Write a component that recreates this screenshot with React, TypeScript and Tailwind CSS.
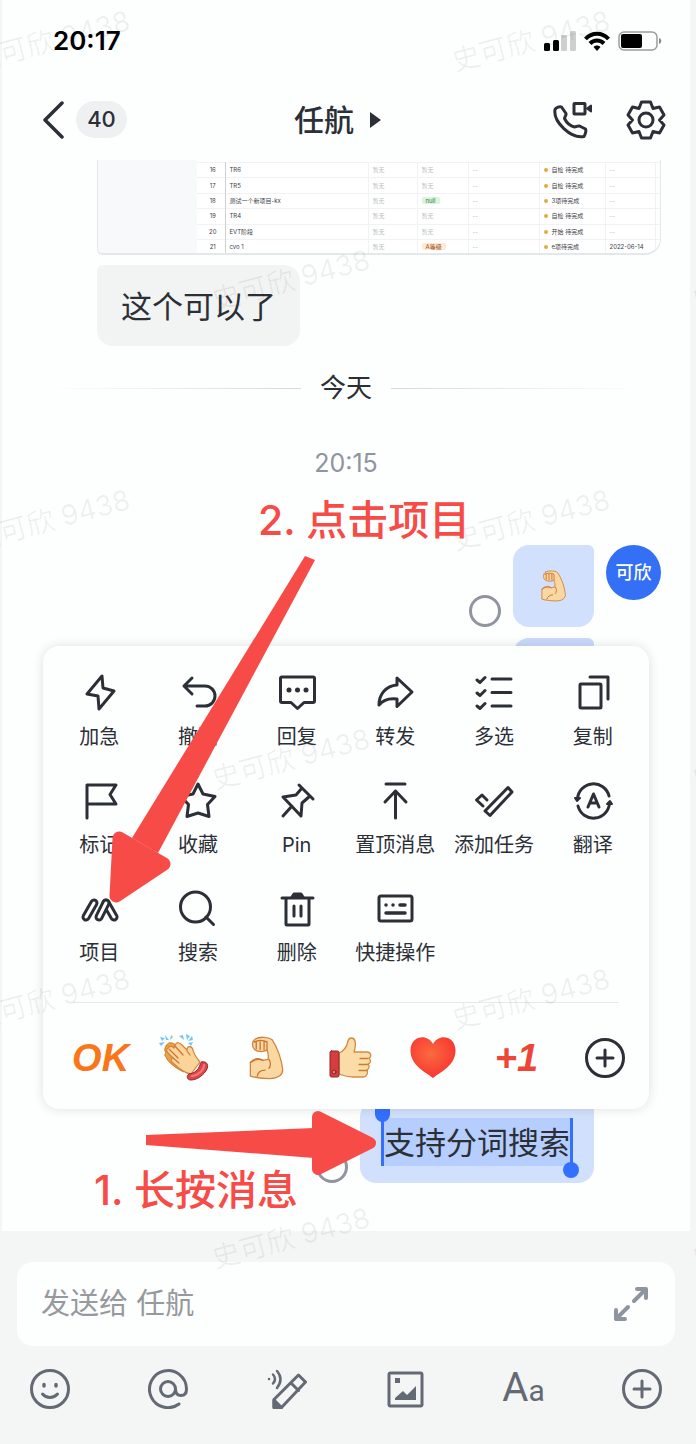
import { ReactNode } from "react";

type IconProps = { children: ReactNode; className?: string };

const Icon = ({ children, className = "size-10" }: IconProps) => (
  <svg
    className={className}
    viewBox="0 0 40 40"
    fill="none"
    stroke="currentColor"
    strokeWidth="3"
    strokeLinecap="round"
    strokeLinejoin="round"
    aria-hidden="true"
  >
    {children}
  </svg>
);

const PlusCircle = () => (
  <Icon>
    <circle cx="20" cy="20" r="18.5" />
    <path d="M20 12v16M12 20h16" />
  </Icon>
);

const Muscle = ({ className }: { className: string }) => (
  <svg className={className} viewBox="0 0 36 45" fill="none" strokeLinejoin="round" strokeLinecap="round">
    <path
      d="M6 3C10 .5 19 .8 23 3.500C29 12 33 25 34 34c.4 6-5 9.500-13 9.500-8 0-15-1-20-2.500V27c4-4.500 9-5 13-2l5-1c1-4 0-7-1-9.500-4 2-10 2-13-1C2 10 3 5 6 3Z"
      fill="#fbd8a2"
      stroke="#cf8540"
      strokeWidth="1.300"
    />
    <path d="M20 24c2 3 2 7 0 9M8 41c1-4 4-6 8-6M1 27c4-3 8-4 13-2M7 6v7M11 6v8M15 6v8M5 6c4-2 9-2 13 0v8" stroke="#c9722f" strokeWidth="1.300" />
  </svg>
);

const Clap = () => (
  <svg className="h-12 w-[50px]" viewBox="0 0 50 48" fill="none" strokeLinejoin="round" strokeLinecap="round">
    <path d="m1 3 5 1-3 3zM6 1l4 5h-3zM12 1l-1 5 3-3zM0 9l6-1-4 4zM20 2l4-1 1 5zM27 0l1 6 3-4zM33 2l-4 5 5-1zM29 9l5-1-2 4z" fill="#79c4f5" />
    <path d="M7 12c2-4 5-4 8-2l6 3 13 15-9 10C16 34 9 28 7 23c-2-2-1-3 0-4-2-3-1-5 0-7Z" fill="#f0a047" stroke="#c97726" />
    <path
      d="M9 14c2-3 4-2 6 0l1-3c2-4 5-2 7 0l5 5c0-5 5-4 6 0 1 5 4 8 7 12L32 40c-7-1-13-6-18-11-3-2-2-5 0-5l-4-4c-3-3-3-5-1-6Z"
      fill="#fbd49a"
      stroke="#cf8338"
      strokeWidth="1.200"
    />
    <path d="m10 15 9 9M16 12l8 9M14 24l6 5M28 17l3 4" stroke="#c9772f" strokeWidth="1.200" />
    <path d="M43 28c4-1 7 2 5 7-3 6-10 11-16 11-4 0-5-4-2-6 6-1 9-4 11-9 0-2 1-3 2-3Z" fill="#df4549" stroke="#8f2529" />
    <path d="M45 31c0 5-5 10-12 11" stroke="#f27b78" strokeWidth="2" />
  </svg>
);

const ThumbsUp = () => (
  <svg className="h-[42px] w-[43px]" viewBox="0 0 43 42" fill="none" strokeLinejoin="round" strokeLinecap="round">
    <path
      d="M10 16c5-2 8-7 9-12 1-4 6-4 7 0 1 4 0 8-1 11h13c4 0 5 5 2 6 2 2 2 5-1 6 2 2 1 5-1 6 1 3 0 6-3 7H24c-6 0-8-1-14-3Z"
      fill="#fbdba6"
      stroke="#cf8d45"
      strokeWidth="1.300"
    />
    <path d="M31 21.500h8M30 27.500h9M30 33.500h8" stroke="#c97d35" strokeWidth="1.300" />
    <rect x="1" y="14" width="9" height="26" rx="1.500" fill="#d73c40" stroke="#8d272b" />
    <circle cx="5" cy="35" r="2" fill="#f27472" stroke="#7d2124" />
  </svg>
);

const Heart = () => (
  <svg className="h-[42px] w-[46px]" viewBox="0 0 46 42">
    <defs>
      <radialGradient id="heart" cx="0.45" cy="0.4" r="0.65">
        <stop offset="0" stopColor="#fa6a40" />
        <stop offset="1" stopColor="#f8322f" />
      </radialGradient>
    </defs>
    <path d="M23 41C18 36 0 29 .5 13 1-1 17-4 23 7 29-4 45-1 45.500 13 46 29 28 36 23 41Z" fill="url(#heart)" />
  </svg>
);

const actions = [
  { label: "加急", icon: <path d="m23 4 1 12 11 3-15 18-1-13-11-2Z" /> },
  { label: "撤回", icon: <path d="M14 6l-8 8 8 8M6 14h21a10 10 0 0 1 0 20h-8" /> },
  {
    label: "回复",
    icon: (
      <>
        <path d="M5 5h31q1.500 0 1.500 1.500V29q0 1.500-1.500 1.500H27l-6.500 6-6.500-6H5q-1.500 0-1.500-1.500V6.500Q3.500 5 5 5Z" />
        <path d="M12 18h.01M20.500 18h.01M29 18h.01" strokeWidth="5" />
      </>
    ),
  },
  { label: "转发", icon: <path d="m22 6 15 14-15 14.500V27c-8-1-14 1-18 6 0-11 7-19 18-20Z" /> },
  {
    label: "多选",
    icon: <path d="M18 7h19M18 20.500h19M18 34h19M3 8l3 2.500 5-5M3 21l3 2.500 5-5M3 34l3 2.500 5-5" />,
  },
  {
    label: "复制",
    icon: (
      <>
        <rect x="7" y="12" width="21" height="24" rx="1" />
        <path d="M17 5h18v22" />
      </>
    ),
  },
  { label: "标记", icon: <path d="M8 38V5h29l-6 9.500 6 9.500H8" /> },
  { label: "收藏", icon: <path d="m20 4 5 10 12 2.500-7.500 8L31 36.500 20 33 9 36.500l1.500-12-7.500-8L15 14Z" /> },
  { label: "Pin", icon: <path d="m22 5 14 14M25 8l-6 7-13 2 18 19 1-13 8-7M6 36l9-10" /> },
  { label: "置顶消息", icon: <path d="M11 4h19M20.500 38V11M10 22l10.500-11L31 22" /> },
  {
    label: "添加任务",
    icon: (
      <>
        <path d="M34 7.500 38 12 16 35.500 11 31Z" />
        <path d="m9 26-6.500-6L8 15l5 5" />
      </>
    ),
  },
  {
    label: "翻译",
    icon: (
      <>
        <path d="M4.500 19A16 16 0 0 1 36 16M36.500 23A16 16 0 0 1 5 26" />
        <path d="M2 18h5l-3 3ZM34 24l3-3 2 3Z" strokeWidth="2" fill="currentColor" />
        <path d="m15 27 5.500-13L26 27M17 23h7" />
      </>
    ),
  },
  {
    label: "项目",
    icon: (
      <>
        <path d="m27 15 8 14" strokeWidth="9" />
        <path d="m27 15 8 14" strokeWidth="3" stroke="#fff" />
        <path d="m7 29 8-14M20 29l7-14" strokeWidth="9" />
        <path d="m7 29 8-14M20 29l7-14" strokeWidth="3" stroke="#fff" />
      </>
    ),
  },
  {
    label: "搜索",
    icon: (
      <>
        <circle cx="17.500" cy="19" r="15" />
        <path d="m28 29 7.500 7.500" />
      </>
    ),
  },
  {
    label: "删除",
    icon: (
      <>
        <path d="M5 10h31M9 10v26q0 1 1 1h21q1 0 1-1V10M17 18v10M24 18v10" />
        <path d="M15 9l2-3h7l2 3Z" fill="currentColor" />
      </>
    ),
  },
  {
    label: "快捷操作",
    icon: (
      <>
        <rect x="4" y="8" width="33" height="25" rx="2" />
        <path d="M11 17h.01M18 17h.01M25 17h5M11 25h19" strokeWidth="3.500" />
      </>
    ),
  },
];

const reactions = [
  {
    name: "OK",
    art: (
      <span className="font-['Liberation_Sans',sans-serif] text-[38px] leading-10 font-bold text-[#f9761a] italic">
        OK
      </span>
    ),
  },
  { name: "鼓掌", art: <Clap /> },
  { name: "加油", art: <Muscle className="h-11 w-9" /> },
  { name: "赞", art: <ThumbsUp /> },
  { name: "爱心", art: <Heart /> },
  {
    name: "+1",
    art: (
      <span className="font-['Liberation_Sans',sans-serif] text-[38px] leading-10 font-bold text-[#ee4636] italic">
        +1
      </span>
    ),
  },
];

const rows = [
  { id: 16, name: "TR6", level: "暂无", status: "自检 待完成", date: "--" },
  { id: 17, name: "TR5", level: "暂无", status: "自检 待完成", date: "--" },
  { id: 18, name: "测试一个新项目-kx", level: "null", status: "3项待完成", date: "--" },
  { id: 19, name: "TR4", level: "暂无", status: "自检 待完成", date: "--" },
  { id: 20, name: "EVT阶段", level: "暂无", status: "开始 待完成", date: "--" },
  { id: 21, name: "cvo 1", level: "A等级", status: "e项待完成", date: "2022-06-14" },
];

const levelStyles: Record<string, string> = {
  null: "rounded-xs bg-[#d9f5dc] px-1 text-[#2f7a3c]",
  A等级: "rounded-xs bg-[#feead2] px-1 text-[#a04a12]",
  暂无: "text-[#b9bdc2]",
};

const tools = [
  {
    label: "表情",
    art: (
      <Icon>
        <circle cx="20" cy="20" r="18.500" />
        <path d="M14 15.500v1.500M26 15.500v1.500" strokeWidth="3.500" />
        <path d="M12.500 25c4 4.500 11 4.500 15 0" />
      </Icon>
    ),
  },
  {
    label: "提及",
    art: (
      <Icon>
        <circle cx="20" cy="20" r="7.500" />
        <path d="M27.500 20c0 4 1.500 6.500 5.500 6.500s5.500-3 5.500-6.500A18.500 18.500 0 1 0 31 35" />
      </Icon>
    ),
  },
  {
    label: "语音输入",
    art: (
      <Icon>
        <path d="M31.500 6 38.500 13 14.500 38.500H7v-8ZM24 14l7.500 7.500" />
        <path d="M7 31v7.500h7.500Z" fill="currentColor" />
        <path d="M2 10h.01M6 5.500q4 4.500 0 9M10 2q7 8 0 17" strokeWidth="2.500" />
      </Icon>
    ),
  },
  {
    label: "图片",
    art: (
      <Icon>
        <rect x="4" y="4" width="33" height="33" rx="1.500" />
        <path d="M10 9h5v5h-5ZM10 31v-2l8-7 4 4 9-9v14Z" fill="currentColor" stroke="none" />
      </Icon>
    ),
  },
  {
    label: "文字格式",
    art: (
      <span className="font-[Roboto,sans-serif] text-[40px] leading-10 whitespace-nowrap">
        A<span className="text-[30px]">a</span>
      </span>
    ),
  },
  { label: "更多", art: <PlusCircle /> },
];

const StatusBar = () => (
  <div className="flex h-[82px] items-center justify-between pr-7 pl-[51px]">
    <span className="text-[26px] leading-8 font-semibold text-black">20:17</span>
    <div className="flex items-center gap-2 text-black">
      <svg className="h-5 w-8" viewBox="0 0 32 20">
        <rect x="0" y="12" width="6" height="8" rx="1.500" />
        <rect x="9" y="9" width="6" height="11" rx="1.500" />
        <rect x="17" y="4" width="6" height="16" rx="1.500" fill="#cfcfcf" />
        <rect x="26" y="0" width="6" height="20" rx="1.500" fill="#cfcfcf" />
      </svg>
      <svg className="h-5 w-[26px]" viewBox="0 0 26 20" fill="none" stroke="black" strokeWidth="4">
        <path d="M1.500 8C8 1 18 1 24.500 8" />
        <path d="M6 12.500c4-4 10-4 14 0" />
        <path d="m9.500 16 3.500 4 3.500-4c-2-2-5-2-7 0Z" fill="black" stroke="none" />
      </svg>
      <svg className="h-5 w-11" viewBox="0 0 44 20">
        <rect x="1" y="1" width="38" height="18" rx="5" fill="none" stroke="#9c9c9c" strokeWidth="1.500" />
        <rect x="3" y="3" width="21" height="14" rx="2" />
        <path d="M41 7c3 1 3 5 0 6Z" fill="#888" />
      </svg>
    </div>
  </div>
);

const Header = () => (
  <header className="grid h-[78px] grid-cols-[1fr_auto_1fr] items-center px-6 pb-[3px] text-[#2b2f36]">
    <div className="flex items-center gap-3 pl-4">
      <button aria-label="返回">
        <svg className="h-[38px] w-[22px]" viewBox="0 0 22 38" fill="none" stroke="currentColor" strokeWidth="3.500" strokeLinecap="round" strokeLinejoin="round">
          <path d="M20 2 3 19l17 17" />
        </svg>
      </button>
      <span className="flex h-[37px] w-[51px] items-center justify-center rounded-full bg-[#eff0f1] text-[22px] font-medium">
        40
      </span>
    </div>
    <h1 className="flex items-center gap-[15px] pr-[17px] text-[30px] leading-10 font-medium">
      任航
      <svg className="h-4 w-3" viewBox="0 0 12 16" fill="currentColor">
        <path d="M1 0v16l11-8Z" />
      </svg>
    </h1>
    <div className="flex items-center justify-end gap-[34px]">
      <button aria-label="通话">
        <Icon>
          <path d="M3 9.500C4 7.500 8 6 9.500 7L14 13.500c.5 2-1.500 3-1.500 5 2 4 6 7.500 10 8.500 2 0 3-1.500 5-1l6 3c1 2-.5 6-1.500 7.500C19 39 1 22 3 9.500Z" />
          <rect x="22" y="3.500" width="11" height="10.500" rx="0.500" />
          <path d="m35 8.500 4-3v6Z" fill="currentColor" strokeWidth="2" />
        </Icon>
      </button>
      <button aria-label="设置">
        <Icon>
          <path d="M15.500 2h9l2.500 6.500 6.500-1.500 4.500 8-4.500 5 4.500 5-4.500 8-6.500-1.500-2.500 6.500h-9L13 31.500 6.500 33 2 25l4.500-5L2 15l4.500-8L13 8.500Z" />
          <circle cx="20" cy="20" r="7" />
        </Icon>
      </button>
    </div>
  </header>
);

const TablePreview = () => (
  <div className="mr-[29px] ml-[95px] flex h-[95px] overflow-hidden rounded-bl-md rounded-br-2xl border-r border-b-2 border-l border-[#e4e8ea] bg-white">
    <div className="w-[99px] flex-none bg-[#f7f9fb]" />
    <table className="mt-0.5 h-[92px] flex-1 table-fixed text-[6px] leading-[8px] text-[#3c4048]">
      <colgroup>
        <col className="w-[28px]" />
        <col />
        <col className="w-[49px]" />
        <col className="w-[51px]" />
        <col className="w-[71px]" />
        <col className="w-[66px]" />
        <col className="w-[50px]" />
        <col className="w-[5px]" />
      </colgroup>
      <tbody>
        {rows.map((row) => (
          <tr key={row.id} className="border-t border-[#f0f2f4]">
            <td className="border-r border-[#cdd1d5] pl-1 text-center">{row.id}</td>
            <td className="border-r border-[#f0f2f4] pl-1">{row.name}</td>
            <td className="border-r border-[#f0f2f4] pl-1 text-[#b9bdc2]">暂无</td>
            <td className="border-r border-[#f0f2f4] pl-1">
              <span className={levelStyles[row.level]}>{row.level}</span>
            </td>
            <td className="border-r border-[#f0f2f4] pl-1 text-[#b9bdc2]">--</td>
            <td className="border-r border-[#f0f2f4] pl-1">
              <span className="flex items-center gap-1">
                <span className="size-1 rounded-full bg-[#e2ab3f]" />
                {row.status}
              </span>
            </td>
            <td className="border-r border-[#f0f2f4] pl-1 whitespace-nowrap">
              <span className={row.date === "--" ? "text-[#b9bdc2]" : ""}>{row.date}</span>
            </td>
            <td />
          </tr>
        ))}
      </tbody>
    </table>
  </div>
);

const SelectCircle = ({ label }: { label: string }) => (
  <input
    type="checkbox"
    aria-label={label}
    className="size-8 flex-none appearance-none rounded-full border-3 border-[#8f959e]"
  />
);

const ActionMenu = () => (
  <section className="relative z-10 mx-[41px] rounded-2xl bg-[#fdfefe] pt-[26px] shadow-[0_0_12px_rgba(0,0,0,0.12)]">
    <div className="grid grid-cols-6 gap-y-[29px] px-[7px] text-[#2b2f36]">
      {actions.map((action) => (
        <button key={action.label} className="flex flex-col items-center gap-[11px]">
          <Icon>{action.icon}</Icon>
          <span className="text-[20px] leading-7 whitespace-nowrap">{action.label}</span>
        </button>
      ))}
    </div>
    <hr className="mx-[30px] mt-[35px] border-[#e6e9eb]" />
    <div className="flex h-[106px] items-center gap-[27px] pt-[3px] pr-6 pl-4">
      <div className="grid flex-1 grid-cols-6 place-items-center">
        {reactions.map((reaction) => (
          <button key={reaction.name} aria-label={reaction.name}>
            {reaction.art}
          </button>
        ))}
      </div>
      <button aria-label="更多表情" className="text-[#2b2f36]">
        <PlusCircle />
      </button>
    </div>
  </section>
);

const Composer = () => (
  <footer className="pt-[31px] pb-[35px]">
    <div className="mx-[15px] flex h-[84px] items-center rounded-2xl bg-[#fdfefe] pr-6 pl-6">
      <input
        type="text"
        aria-label="消息"
        placeholder="发送给 任航"
        className="min-w-0 flex-1 text-[29px] leading-10 outline-none placeholder:text-[#96999d]"
      />
      <button aria-label="展开" className="text-[#8f959e]">
        <svg className="size-10" viewBox="0 0 40 40" fill="none" stroke="currentColor" strokeWidth="4" strokeLinecap="round" strokeLinejoin="round">
          <path d="M23 17 35 5M26 5h9v9M17 23 5 35M5 26v9h9" />
        </svg>
      </button>
    </div>
    <div className="mt-[23px] flex justify-between px-7 text-[#646a73]">
      {tools.map((tool) => (
        <button key={tool.label} aria-label={tool.label} className="flex h-10 w-10 items-center justify-center">
          {tool.art}
        </button>
      ))}
    </div>
  </footer>
);

const watermarks = [
  "left-[-30px] top-[23px]",
  "left-[450px] top-[23px]",
  "left-[210px] top-[262px]",
  "left-[690px] top-[262px]",
  "left-[-30px] top-[502px]",
  "left-[450px] top-[502px]",
  "left-[210px] top-[741px]",
  "left-[690px] top-[741px]",
  "left-[-30px] top-[981px]",
  "left-[450px] top-[981px]",
  "left-[210px] top-[1220px]",
  "left-[690px] top-[1220px]",
];

const Watermarks = () => (
  <div className="pointer-events-none absolute inset-0 z-20 overflow-hidden" aria-hidden="true">
    {watermarks.map((place) => (
      <span
        key={place}
        className={`absolute w-[160px] -rotate-15 text-center text-[28px] leading-9 whitespace-nowrap text-black/6 ${place}`}
      >
        史可欣 9438
      </span>
    ))}
  </div>
);

const Annotations = () => (
  <div className="pointer-events-none absolute inset-0 z-30 font-medium text-[#f64b46]">
    <p className="absolute top-[490px] left-[258px] text-[41px] leading-[60px] whitespace-nowrap">2. 点击项目</p>
    <svg className="absolute top-[552px] left-[106px] h-[354px] w-[212px]" viewBox="106 552 212 354" fill="currentColor">
      <path d="m305 556 10 4-157 293-26-15Z" />
      <path d="m119 838 45 26-48 32Z" stroke="currentColor" strokeWidth="13" strokeLinejoin="round" />
    </svg>
    <svg className="absolute top-[1108px] left-[144px] h-[70px] w-[234px]" viewBox="144 1108 234 70" fill="currentColor">
      <path d="m146 1135 168-7v30l-168-13Z" />
      <path d="m318 1117 52 26-52 26Z" stroke="currentColor" strokeWidth="12" strokeLinejoin="round" />
    </svg>
    <p className="absolute top-[1160px] left-[94px] text-[41px] leading-[60px] whitespace-nowrap">1. 长按消息</p>
  </div>
);

const App = () => (
  <div className="relative overflow-hidden bg-[#f4f5f5] pr-1.5 pl-0.5 font-[Inter,'Noto_Sans_CJK_SC',sans-serif] text-[#2b2f36]">
    <main className="bg-[#fdfefe] pb-12">
      <StatusBar />
      <Header />
      <TablePreview />
      <p className="mt-2.5 ml-[95px] flex h-[81px] w-fit items-center rounded-2xl rounded-tl-md bg-[#f2f3f3] px-6 pt-[3px] text-[31px]">
        这个可以了
      </p>
      <div className="mx-[46px] mt-7 flex items-center gap-[19px]">
        <span className="h-px flex-1 bg-linear-to-r from-transparent to-[#d5d8db]" />
        <span className="text-[26px] leading-7">今天</span>
        <span className="h-px flex-1 bg-linear-to-l from-transparent to-[#d5d8db]" />
      </div>
      <p className="mt-[47px] text-center text-[25px] leading-7 text-[#8f959e]">20:15</p>
      <div className="mt-[68px] mr-[29px] flex items-start justify-end gap-3">
        <div className="flex items-end gap-3">
          <SelectCircle label="选择表情消息" />
          <div className="flex h-[82px] w-[81px] items-center justify-center rounded-2xl rounded-tr-md bg-[#d1e0fd]">
            <Muscle className="h-8 w-[26px]" />
          </div>
        </div>
        <div className="flex size-[55px] items-center justify-center rounded-full bg-[#3370f5] text-[18px] font-medium text-white">
          可欣
        </div>
      </div>
      <div className="mt-[11px] mr-24 -mb-4 ml-auto h-6 w-[81px] rounded-tl-2xl rounded-tr-md bg-[#c9dafb]" />
      <ActionMenu />
      <div className="-mt-2 mr-24 flex items-end justify-end gap-3">
        <SelectCircle label="选择文字消息" />
        <div className="flex h-[82px] items-center rounded-2xl rounded-tr-md bg-[#d1e0fd] px-[21px]">
          <span className="relative flex h-12 items-center border-x-3 border-[#3370ff] bg-[#b5cefd] pt-0.5 text-[31px] whitespace-nowrap">
            支持分词搜索
            <span className="absolute -top-3 -left-[9px] h-4 w-[15px] rounded-b-full bg-[#3370ff]" />
            <span className="absolute -right-[9px] -bottom-3 size-4 rounded-full bg-[#3370ff]" />
          </span>
        </div>
      </div>
    </main>
    <Composer />
    <Watermarks />
    <Annotations />
  </div>
);

export default App;
